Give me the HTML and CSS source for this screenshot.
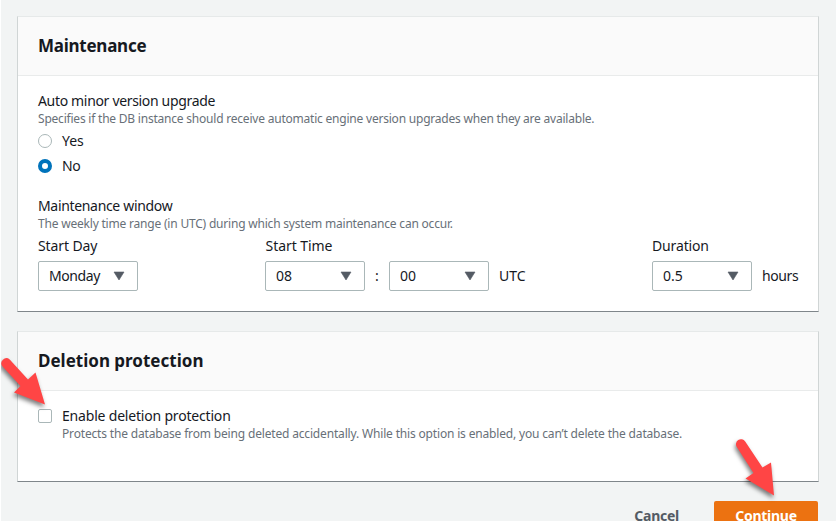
FILE: index.html
```html
<!DOCTYPE html>
<html lang="en">
<head>
<meta charset="utf-8">
<title>Maintenance</title>
<link rel="stylesheet" href="styles.css">
</head>
<body>
<main class="page">
  <section class="panel">
    <header class="panel-header"><h2 class="t-maint">Maintenance</h2></header>
    <div class="panel-body maintenance">
      <div class="label"><span class="t-auto">Auto minor version upgrade</span></div>
      <div class="hint"><span class="t-spec">Specifies if the DB instance should receive automatic engine version upgrades when they are available.</span></div>
      <label class="option"><span class="radio"></span><span>Yes</span></label>
      <label class="option"><span class="radio checked"></span><span class="t-no">No</span></label>
      <div class="label window"><span class="t-window">Maintenance window</span></div>
      <div class="hint"><span class="t-weekly">The weekly time range (in UTC) during which system maintenance can occur.</span></div>
      <div class="fields">
        <div class="field day">
          <div class="label"><span class="t-day">Start Day</span></div>
          <div class="controls"><div class="select"><span class="t-monday">Monday</span><svg viewBox="0 0 12 10"><path d="M1 1h10L6 9z"/></svg></div></div>
        </div>
        <div class="field time">
          <div class="label"><span class="t-time">Start Time</span></div>
          <div class="controls">
            <div class="select"><span>08</span><svg viewBox="0 0 12 10"><path d="M1 1h10L6 9z"/></svg></div>
            <span class="colon">:</span>
            <div class="select"><span>00</span><svg viewBox="0 0 12 10"><path d="M1 1h10L6 9z"/></svg></div>
            <span class="unit t-utc">UTC</span>
          </div>
        </div>
        <div class="field">
          <div class="label"><span class="t-duration">Duration</span></div>
          <div class="controls">
            <div class="select"><span>0.5</span><svg viewBox="0 0 12 10"><path d="M1 1h10L6 9z"/></svg></div>
            <span class="unit t-hours">hours</span>
          </div>
        </div>
      </div>
    </div>
  </section>
  <section class="panel">
    <header class="panel-header"><h2 class="t-deletion">Deletion protection</h2></header>
    <div class="panel-body deletion">
      <span class="checkbox"></span>
      <div>
        <div class="label"><span class="t-enable">Enable deletion protection</span></div>
        <div class="hint"><span class="t-protects">Protects the database from being deleted accidentally. While this option is enabled, you can’t delete the database.</span></div>
      </div>
    </div>
  </section>
  <footer class="actions">
    <span class="cancel">Cancel</span>
    <button class="continue">Continue</button>
  </footer>
</main>
<svg class="arrow arrow-left" viewBox="0 0 60 60"><path d="M2.6 7.5A5 5 0 0 1 9.7 0.5L28 20.5 35.5 13.5 45 45.5 14 33.5 20.5 27z"/></svg>
<svg class="arrow arrow-right" viewBox="0 0 60 70"><path d="M6.8 12A5 5 0 0 1 15.2 6.5L32.5 32.5 41 27.5 44 60.5 15.5 43.5 23.5 38z"/></svg>
</body>
</html>
```
FILE: styles.css
```css
* { box-sizing: border-box; }
body {
  margin: 0;
  height: 521px;
  overflow: hidden;
  position: relative;
  background: #f2f4f4;
  border-left: 1px solid #fff;
  color: #16191f;
  font-family: "Noto Sans", "Open Sans", sans-serif;
  font-size: 14px;
  line-height: 20px;
}
.page { padding: 16px 17px 0 16px; }
.panel {
  background: #fff;
  border: 1px solid #d0d5d5;
  border-top-color: #e6e9e9;
  border-bottom-color: #7f868a;
  margin-bottom: 19px;
}
.panel-header {
  height: 59px;
  padding: 17px 20px 0;
  background: #fafafa;
  border-bottom: 1px solid #e9ebeb;
}
h2 { margin: 0; font-size: 17px; line-height: 24px; font-weight: 700; }
.t-maint { letter-spacing: -.25px; }
.t-auto, .t-window { letter-spacing: -.33px; }
.t-spec { letter-spacing: -.213px; }
.t-weekly { letter-spacing: -.2px; }
.t-monday, .t-hours, .t-no { letter-spacing: -.4px; }
.t-day { letter-spacing: -.1px; }
.t-time { letter-spacing: -.05px; }
.t-duration { letter-spacing: -.15px; }
.t-enable { letter-spacing: -.19px; }
.t-protects { letter-spacing: -.168px; }
.label, .hint { white-space: nowrap; }
.hint { color: #687078; font-size: 12px; line-height: 16px; }
.maintenance { height: 235px; padding: 15px 19px 0 20px; }
.option { display: flex; align-items: center; gap: 10px; height: 25px; }
.hint + .option { margin-top: 1px; }
.radio {
  width: 14px;
  height: 14px;
  border: 1px solid #aab7b8;
  border-radius: 50%;
  background: #fff;
}
.radio.checked { border: 4px solid #0073bb; }
.window { margin-top: 18px; }
.fields { display: flex; margin-top: 4px; }
.field { flex: none; }
.day { width: 227px; }
.time { width: 387px; }
.time .label { padding-left: .5px; }
.controls { display: flex; align-items: center; margin-top: 5px; }
.select {
  display: flex;
  align-items: center;
  justify-content: space-between;
  width: 100px;
  height: 30px;
  padding: 0 12px 0 10px;
  border: 1px solid #aab7b8;
  border-radius: 2px;
}
.select svg { width: 12px; height: 10px; fill: #545b64; stroke: #545b64; stroke-width: .6; stroke-linejoin: round; }
.colon { width: 24px; text-align: center; }
.unit { margin-left: 10px; }
.deletion { display: flex; gap: 10px; height: 90px; padding: 15px 20px 0; }
.checkbox { width: 14px; height: 14px; margin-top: 3px; border: 1px solid #aab7b8; border-radius: 2px; }
.actions { display: flex; justify-content: flex-end; padding-right: 1px; font-weight: 700; letter-spacing: -.25px; }
.cancel { margin-right: 35px; padding-top: 5px; color: #545b64; }
.continue {
  width: 104px;
  height: 30px;
  padding: 0;
  border: 0;
  border-radius: 2px;
  background: #ec7211;
  color: #fff;
  font: inherit;
  letter-spacing: inherit;
}
.arrow { position: absolute; overflow: visible; fill: #ff4545; filter: drop-shadow(-1px 3px 2px rgb(0 0 0 / 50%)); }
.arrow-left { left: -1px; top: 359px; width: 60px; height: 60px; }
.arrow-right { left: 729px; top: 435px; width: 60px; height: 70px; }
```
